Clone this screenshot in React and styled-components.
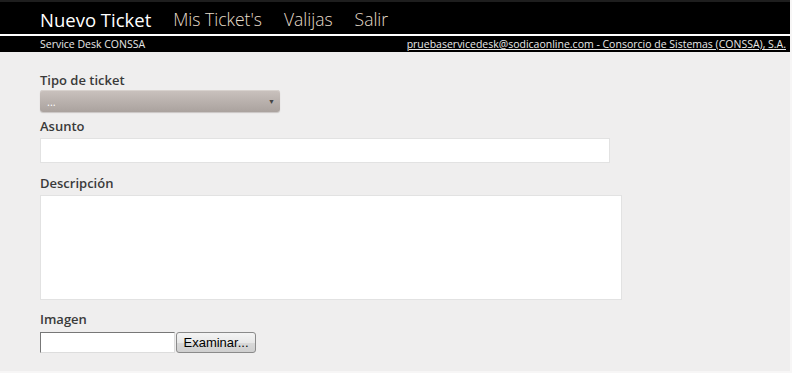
import React from 'react';
import styled, { createGlobalStyle } from 'styled-components';

const GlobalStyle = createGlobalStyle`
  html, body {
    margin: 0;
    padding: 0;
    background: #efeeee;
  }
  body {
    font-family: "Open Sans", "Noto Sans", sans-serif;
  }
`;

export default function App() {
  return (
    <>
      <GlobalStyle />
      <Page>
        <TopBar>
          <Menu>
            <MenuItem active>Nuevo Ticket</MenuItem>
            <MenuItem>Mis Ticket's</MenuItem>
            <MenuItem>Valijas</MenuItem>
            <MenuItem>Salir</MenuItem>
          </Menu>
        </TopBar>
        <SubBar>
          <span>Service Desk CONSSA</span>
          <UserLink>pruebaservicedesk@sodicaonline.com - Consorcio de Sistemas (CONSSA), S.A.</UserLink>
        </SubBar>
        <Form>
          <Field space={0} gap={2}>
            <Label>Tipo de ticket</Label>
            <Select>
              <span>...</span>
              <Arrow>▼</Arrow>
            </Select>
          </Field>
          <Field space={6} gap={4}>
            <Label>Asunto</Label>
            <TextInput />
          </Field>
          <Field space={12} gap={4}>
            <Label>Descripción</Label>
            <TextArea />
          </Field>
          <Field space={11} gap={5}>
            <Label>Imagen</Label>
            <FileRow>
              <FileBox />
              <BrowseButton>Examinar...</BrowseButton>
            </FileRow>
          </Field>
        </Form>
      </Page>
    </>
  );
}

const Page = styled.div`
  width: 790px;
  height: 371px;
  border-right: 2px solid #f7f6f6;
  border-bottom: 2px solid #f7f6f6;
  background: #efeeee;
`;

const TopBar = styled.div`
  background: #000;
  border-top: 2px solid #1e1e1e;
  border-bottom: 2px solid #fff;
  box-sizing: border-box;
  height: 36px;
`;

const Menu = styled.nav`
  display: flex;
  gap: 22px;
  padding-left: 40px;
  height: 100%;
  align-items: center;
`;

const MenuItem = styled.span`
  font-size: ${props => (props.active ? '18.5px' : '17.5px')};
  font-weight: ${props => (props.active ? 400 : 300)};
  line-height: 1;
  margin-top: 4px;
  color: ${props => (props.active ? '#ffffff' : '#e6dccb')};
`;

const SubBar = styled.div`
  height: 16px;
  background: #000;
  display: flex;
  justify-content: space-between;
  align-items: center;
  padding: 0 4px 0 40px;
  font-size: 10.5px;
  color: #e8e8e8;
`;

const UserLink = styled.span`
  text-decoration: underline;
`;

const Form = styled.div`
  display: flex;
  flex-direction: column;
  padding: 20px 0 0 40px;
`;

const Field = styled.div`
  display: flex;
  flex-direction: column;
  gap: ${props => props.gap}px;
  margin-top: ${props => props.space}px;
`;

const Label = styled.label`
  font-size: 13px;
  font-weight: 600;
  color: #3a3a3a;
  line-height: 16px;
`;

const Select = styled.div`
  width: 240px;
  height: 22px;
  box-sizing: border-box;
  border-radius: 3px;
  background: linear-gradient(#cac2be, #aaa29e);
  box-shadow: inset 0 1px 0 #d8d2ce, 0 1px 1px #c8c4c2;
  display: flex;
  justify-content: space-between;
  align-items: center;
  padding: 0 5px 0 7px;
  font-size: 11px;
  color: #fff;
`;

const Arrow = styled.span`
  font-size: 7px;
  color: #444;
`;

const TextInput = styled.div`
  width: 570px;
  height: 25px;
  box-sizing: border-box;
  background: #fff;
  border: 1px solid #e2e2e2;
`;

const TextArea = styled.div`
  width: 582px;
  height: 105px;
  box-sizing: border-box;
  background: #fff;
  border: 1px solid #e2e2e2;
`;

const FileRow = styled.div`
  display: flex;
  align-items: stretch;
  height: 21px;
  gap: 1px;
`;

const FileBox = styled.div`
  width: 135px;
  box-sizing: border-box;
  background: #fff;
  border-top: 1px solid #777;
  border-left: 1px solid #777;
  border-right: 1px solid #ddd;
  border-bottom: 1px solid #ddd;
`;

const BrowseButton = styled.button`
  width: 80px;
  box-sizing: border-box;
  padding: 0;
  border: 1px solid #8a8a8a;
  border-radius: 3px;
  background: linear-gradient(#f4f4f4 0%, #e8e8e8 50%, #d9d9d9 51%, #cfcfcf 100%);
  font-family: "Liberation Sans", Arial, sans-serif;
  font-size: 13px;
  color: #000;
`;
